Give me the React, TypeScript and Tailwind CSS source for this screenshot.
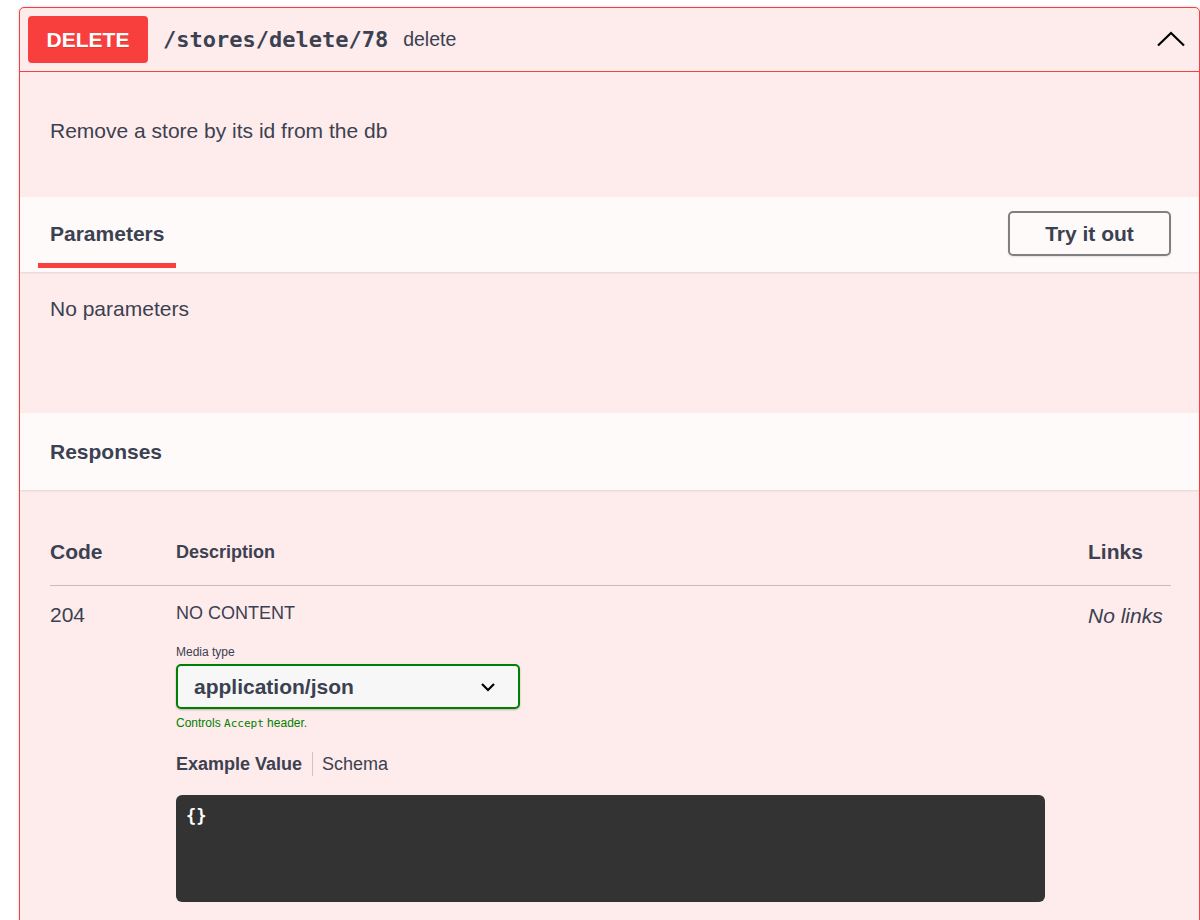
import React from 'react';

const sans = "font-['Liberation_Sans',Arial,sans-serif]";
const mono = "font-['DejaVu_Sans_Mono','Liberation_Mono',monospace]";

const ChevronUp = () => (
  <svg width="30" height="30" viewBox="0 0 30 30" fill="none">
    <polyline points="2,20.5 15,8 28,20.5" stroke="#000" strokeWidth="2.2" />
  </svg>
);

const ChevronDown = () => (
  <svg width="16" height="10" viewBox="0 0 16 10" fill="none">
    <polyline points="2,2 8,8 14,2" stroke="#000" strokeWidth="2.2" />
  </svg>
);

export default function App() {
  return (
    <div className={`min-h-screen bg-white pl-[19px] pt-[7px] text-[#3b4151] ${sans}`}>
      <div className="w-[1181px] rounded-[5px] border border-[#f93e3e] bg-[#feebeb] shadow-[0_0_3px_rgba(0,0,0,0.19)]">
        {/* summary */}
        <div className="flex items-center border-b border-[#f93e3e] p-[8px]">
          <div className="flex h-[47px] w-[120px] items-center justify-center rounded-[4px] bg-[#f93e3e] text-[21px] font-bold text-white [text-shadow:0_1px_0_rgba(0,0,0,0.1)]">
            DELETE
          </div>
          <span className={`ml-[15px] text-[22px] font-bold ${mono}`}>/stores/delete/78</span>
          <span className="ml-[15px] text-[19.5px]">delete</span>
          <div className="ml-auto mr-[5px] flex items-center">
            <ChevronUp />
          </div>
        </div>

        {/* description */}
        <div className="h-[125px] px-[30px] pt-[43px]">
          <p className="text-[21px] leading-[31px]">Remove a store by its id from the db</p>
        </div>

        {/* parameters header */}
        <div className="flex h-[75px] items-center justify-between bg-[#fffafa] pr-[28px] shadow-[0_1px_2px_rgba(0,0,0,0.1)]">
          <div className="relative ml-[18px] flex self-stretch items-center px-[12px] pb-[2px]">
            <h4 className="text-[21px] font-bold leading-[24px]">Parameters</h4>
            <div className="absolute bottom-[4px] left-0 right-0 h-[5px] bg-[#f93e3e]" />
          </div>
          <button className="mb-[2px] h-[45px] w-[163px] rounded-[5px] border-2 border-[#808080] bg-transparent text-[21px] font-bold shadow-[0_1px_2px_rgba(0,0,0,0.1)]">
            Try it out
          </button>
        </div>

        <div className="h-[141px] px-[30px] pt-[22px]">
          <p className="text-[21px] leading-[30px]">No parameters</p>
        </div>

        {/* responses header */}
        <div className="flex h-[77px] items-center bg-[#fffafa] px-[30px] shadow-[0_1px_2px_rgba(0,0,0,0.1)]">
          <h4 className="text-[21px] font-bold leading-[24px]">Responses</h4>
        </div>

        {/* responses table */}
        <div className="pl-[30px] pr-[28px] pt-[50px] pb-[40px]">
          <div className="flex items-center border-b border-[#c9babc] pb-[21px]">
            <div className="w-[126px] text-[21px] font-bold leading-[24px]">Code</div>
            <div className="flex-1 text-[18px] font-bold leading-[21px]">Description</div>
            <div className="w-[83px] text-[21px] font-bold leading-[24px]">Links</div>
          </div>

          <div className="flex items-start">
            <div className="w-[126px] pt-[17px] text-[21px] leading-[24px]">204</div>
            <div className="flex-1 pt-[15px]">
              <div className="text-[18px] leading-[24px]">NO CONTENT</div>

              <div className="mt-[20px] text-[12px] leading-[14px]">Media type</div>
              <div className="mt-[5px] flex h-[45px] w-[344px] items-center justify-between rounded-[5px] border-2 border-[#008000] bg-[#f7f7f7] pl-[16px] pr-[22px] shadow-[0_1px_2px_rgba(0,0,0,0.25)]">
                <span className="text-[21px] font-bold">application/json</span>
                <ChevronDown />
              </div>
              <div className="mt-[7px] text-[12px] leading-[14px] text-[#008000]">
                Controls <code className={`text-[11px] ${mono}`}>Accept</code> header.
              </div>

              <div className="mt-[21px] flex items-center text-[18px] leading-[24px]">
                <span className="pr-[10px] font-bold">Example Value</span>
                <span className="h-[24px] w-px bg-[#cfc3c4]" />
                <span className="pl-[9px]">Schema</span>
              </div>

              <div className="mt-[19px] h-[107px] w-[869px] rounded-[6px] bg-[#333333] px-[10px] pt-[10px]">
                <pre className={`text-[17px] font-bold leading-[22px] text-white ${mono}`}>{'{}'}</pre>
              </div>
            </div>
            <div className="w-[83px] pt-[18px] text-[21px] italic leading-[24px]">No links</div>
          </div>
        </div>
      </div>
    </div>
  );
}
